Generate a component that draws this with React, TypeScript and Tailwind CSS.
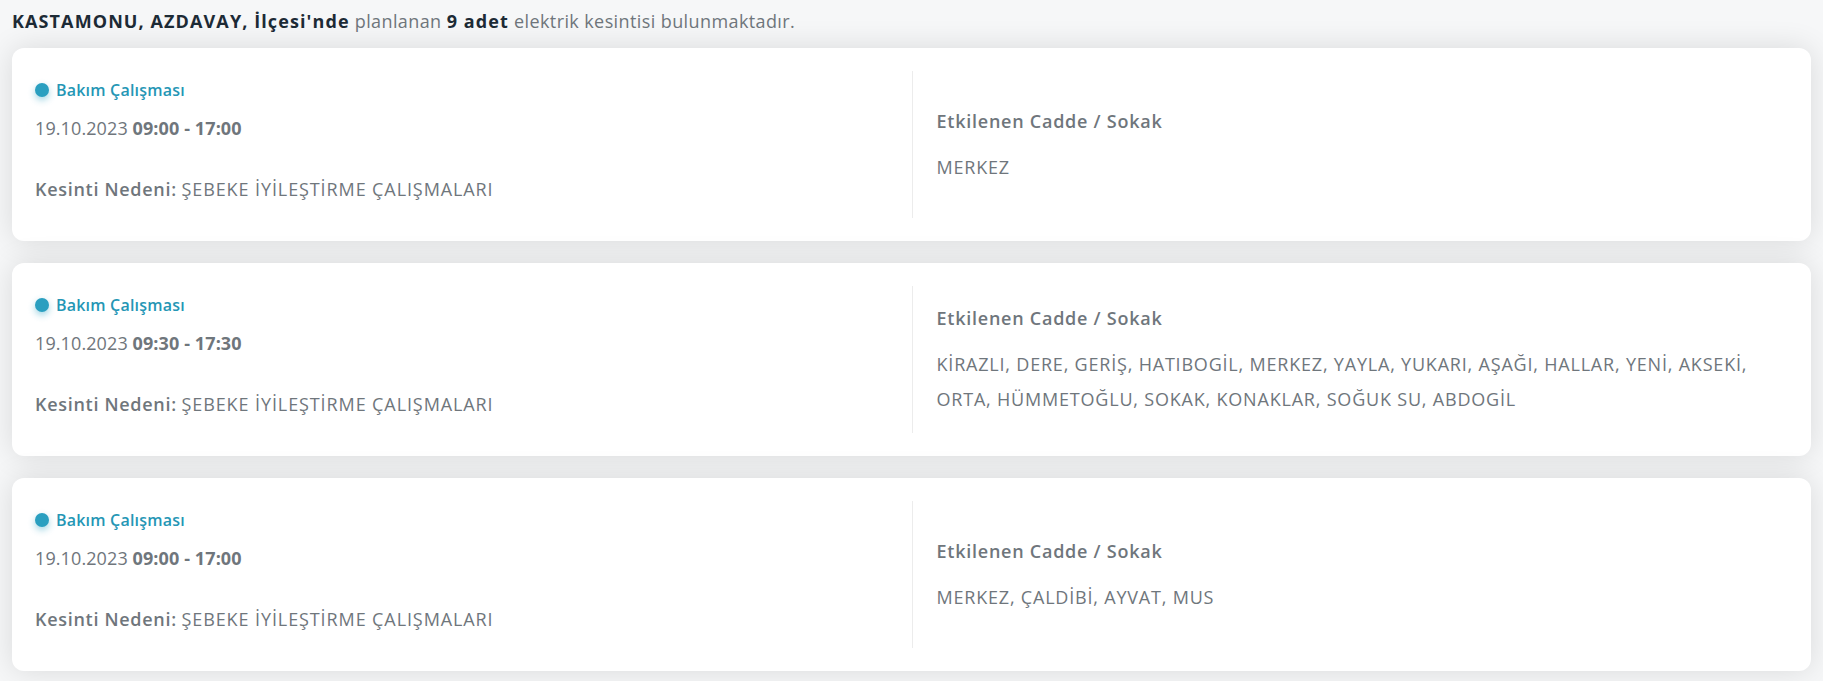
import React from 'react';

type Outage = {
  start: string;
  end: string;
  reason: string;
  streets: string;
};

const outages: Outage[] = [
  { start: '09:00', end: '17:00', reason: 'ŞEBEKE İYİLEŞTİRME ÇALIŞMALARI', streets: 'MERKEZ' },
  {
    start: '09:30',
    end: '17:30',
    reason: 'ŞEBEKE İYİLEŞTİRME ÇALIŞMALARI',
    streets:
      'KİRAZLI, DERE, GERİŞ, HATIBOGİL, MERKEZ, YAYLA, YUKARI, AŞAĞI, HALLAR, YENİ, AKSEKİ, ORTA, HÜMMETOĞLU, SOKAK, KONAKLAR, SOĞUK SU, ABDOGİL',
  },
  { start: '09:00', end: '17:00', reason: 'ŞEBEKE İYİLEŞTİRME ÇALIŞMALARI', streets: 'MERKEZ, ÇALDİBİ, AYVAT, MUS' },
];

const OutageCard: React.FC<{ item: Outage }> = ({ item }) => (
  <div className="grid grid-cols-2 rounded-[12px] bg-white py-[23px] shadow-[0_0_30px_rgba(0,0,0,0.12)]">
    <div className="pl-[23px] pt-[9px]">
      <div className="flex h-[20px] items-center gap-[7px]">
        <span className="h-[14px] w-[14px] rounded-full bg-[#2a9fc0] shadow-[0_3px_7px_rgba(42,159,192,0.45)]" />
        <span className="text-[16px] font-semibold tracking-[0.2px] text-[#2596b5]">Bakım Çalışması</span>
      </div>
      <div className="mt-[16px] h-[24px] text-[18px] leading-[24px] tracking-[0.1px] text-[#6f767c]">
        19.10.2023{' '}
        <span className="font-bold">
          {item.start} - {item.end}
        </span>
      </div>
      <div className="mt-[37px] h-[24px] text-[18px] leading-[24px] text-[#6f767c]">
        <span className="font-semibold tracking-[0.7px]">Kesinti Nedeni:</span>{' '}
        <span className="tracking-[0.9px]">{item.reason}</span>
      </div>
    </div>
    <div className="flex min-h-[147px] flex-col justify-center border-l border-[#ececec] pl-[24px] pr-[30px] pt-[4px]">
      <div className="mb-[17px] text-[18px] leading-[24px] font-semibold tracking-[0.75px] text-[#6f767c]">
        Etkilenen Cadde / Sokak
      </div>
      <div className="text-[18px] leading-[35px] tracking-[0.8px] text-[#6f767c]">{item.streets}</div>
    </div>
  </div>
);

export default function App() {
  return (
    <div
      className="min-h-screen bg-[#f6f7f8] px-[12px] pb-[10px]"
      style={{ fontFamily: '"Open Sans", "Noto Sans", sans-serif' }}
    >
      <p className="pt-[9px] pb-[15px] text-[18px] leading-[24px] tracking-[0.4px] text-[#6f767c]">
        <span className="font-bold tracking-[1.1px] text-[#1d2b36]">KASTAMONU, AZDAVAY, İlçesi'nde</span> planlanan{' '}
        <span className="font-bold tracking-[1.1px] text-[#1d2b36]">9 adet</span> elektrik kesintisi bulunmaktadır.
      </p>
      <div className="flex flex-col gap-[22px]">
        {outages.map((o, i) => (
          <OutageCard key={i} item={o} />
        ))}
      </div>
    </div>
  );
}
